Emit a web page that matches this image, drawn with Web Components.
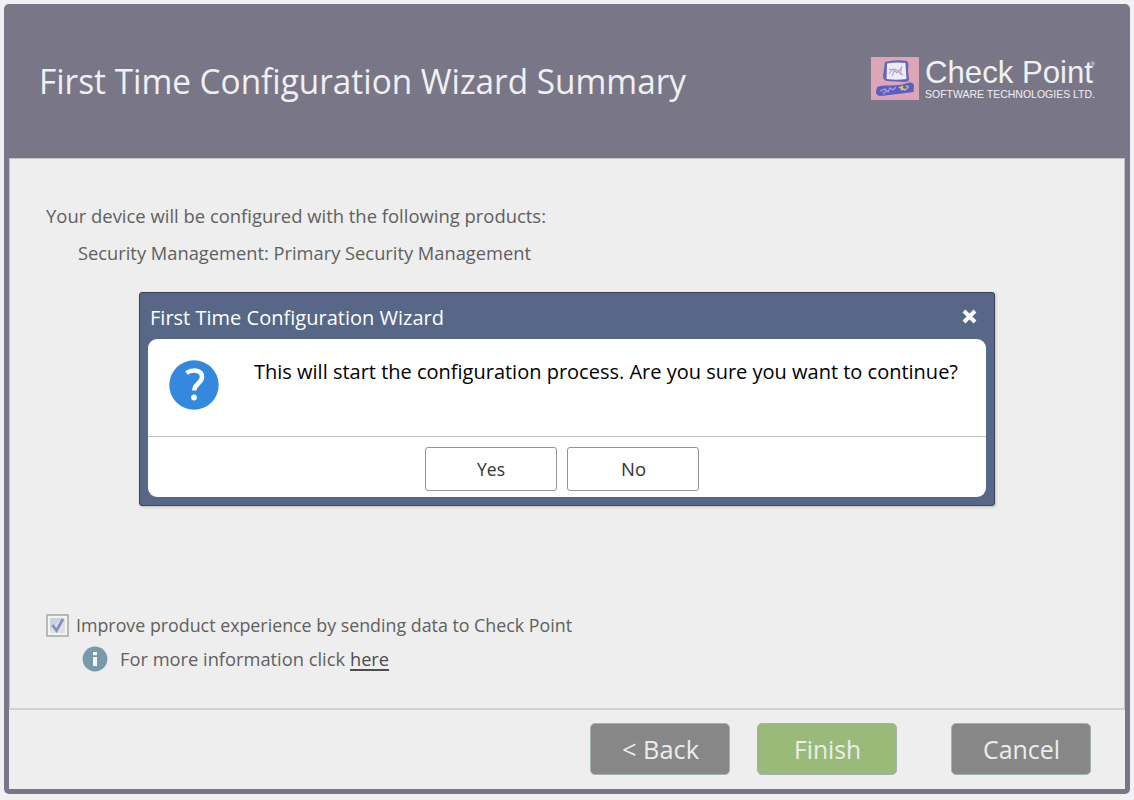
<!DOCTYPE html>
<html lang="en">
<head>
<meta charset="utf-8">
<title>First Time Configuration Wizard</title>
<style>
html, body { margin: 0; height: 100%; background: #f0f1f0; font-family: "Open Sans", "Noto Sans", sans-serif; overflow: hidden; }
</style>
</head>
<body>
<wizard-window>
  <fit-text slot="title" width="647" size="35" line="48">First Time Configuration Wizard Summary</fit-text>
  <check-point-logo slot="brand"></check-point-logo>
  <product-summary></product-summary>
  <product-consent></product-consent>
  <wizard-button slot="actions" label="&lt; Back" width="77"></wizard-button>
  <wizard-button slot="actions" kind="primary" label="Finish" width="67"></wizard-button>
  <wizard-button slot="actions" kind="last" label="Cancel" width="77"></wizard-button>
</wizard-window>
<confirm-dialog>
  <fit-text slot="title" width="294" size="20.7" line="28">First Time Configuration Wizard</fit-text>
  <fit-text slot="message" width="704" size="20.7" line="28">This will start the configuration process. Are you sure you want to continue?</fit-text>
  <dialog-button slot="buttons" label="Yes" width="28"></dialog-button>
  <dialog-button slot="buttons" label="No" width="25"></dialog-button>
</confirm-dialog>

<script>
const define = (name, html, setup) => customElements.define(name, class extends HTMLElement {
  connectedCallback() {
    if (this.shadowRoot) return;
    const t = document.createElement('template');
    t.innerHTML = html;
    this.attachShadow({ mode: 'open' }).append(t.content.cloneNode(true));
    if (setup) setup(this, this.shadowRoot);
  }
});

// Single line of text condensed or stretched to a given width.
define('fit-text', `<style>
:host { display: block; white-space: nowrap; flex: none; }
span { display: inline-block; transform-origin: 0 50%; }
:host([underline]) span { text-decoration: underline; text-underline-offset: 3px; text-decoration-thickness: 1.5px; }
</style><span><slot></slot></span>`, (el, root) => {
  const span = root.querySelector('span');
  const width = +el.getAttribute('width');
  el.style.width = width + 'px';
  el.style.fontSize = el.getAttribute('size') + 'px';
  el.style.lineHeight = el.getAttribute('line') + 'px';
  el.style.height = el.getAttribute('line') + 'px';
  const natural = span.getBoundingClientRect().width;
  if (natural) span.style.transform = 'scaleX(' + width / natural + ')';
});

define('check-point-logo', `<style>
:host { display: flex; gap: 6px; color: #f0f0f2; font-family: "Liberation Sans", sans-serif; }
svg { display: block; }
.name { display: flex; }
.words { display: block; }
sup { font-size: 6px; line-height: 8px; margin-left: -2px; margin-top: 3px; }
</style>
<svg width="48" height="43" viewBox="0 0 48 43">
  <rect width="48" height="43" fill="#dda6b8"/>
  <path d="M14 5 Q25 2 36 4 Q38 5 37 14 L38 22 Q38 25 34 25 L16 24 Q12 23 12 19Z" fill="#6163bd"/>
  <path d="M16 6.5 Q25 5 34.5 6 L35.5 22 Q26 23.5 15.5 22Z" fill="#ececf4"/>
  <path d="M18 17l4-5 4 4 5-6M21 19l3-7 3 2 5 4M18 12l3 1M29 18l2-9" fill="none" stroke="#b3a0bf" stroke-width="1.1"/>
  <path d="M6 30 Q10 28 16 28.5 Q30 29 38 25.5 Q43 25 43 29 L42.500 35 Q28 37 10 39 Q5 39 5 35Z" fill="#5c5fc0"/>
  <path d="M9 34l5-2 3 3 2-4 3 2 3-3M12 37l3-3M34 33l4-3" fill="none" stroke="#a8a3d8" stroke-width="1.2"/>
  <path d="M28 30l2 1 2-2M30 33l2-1 3 1M35 29.500l2-.5" fill="none" stroke="#d9cc5b" stroke-width="1.800"/>
</svg>
<div class="words">
  <div class="name"><fit-text width="168" size="32" line="31">Check Point</fit-text><sup>®</sup></div>
  <fit-text width="170" size="11.5" line="12">SOFTWARE TECHNOLOGIES LTD.</fit-text>
</div>`);

define('wizard-window', `<style>
:host { display: flex; flex-direction: column; box-sizing: border-box; width: 1126px; height: 790px; margin: 4px; margin-bottom: 0;
  padding: 0 5px 5px; background: #797787; border-radius: 5px; }
header { display: flex; justify-content: space-between; align-items: flex-start; flex: none; height: 154px; box-sizing: border-box; padding: 53px 30px 0 30px; color: #f0f0f2; }
main { flex: 1; background: #eee; border: 1px solid #c3c3c7; border-bottom: 0; display: flex; flex-direction: column; justify-content: space-between; padding: 44px 36px 36px; }
footer { flex: none; height: 81px; box-sizing: border-box; background: #eee; border-top: 2px solid #d2d2d2; display: flex; justify-content: flex-end; padding: 13px 34px 0; }
</style>
<header><slot name="title"></slot><slot name="brand"></slot></header>
<main><slot></slot></main>
<footer><slot name="actions"></slot></footer>`);

define('product-summary', `<style>
:host { display: flex; flex-direction: column; gap: 11px; color: #606060; }
.item { padding-left: 32px; }
</style>
<fit-text width="500" size="19" line="26">Your device will be configured with the following products:</fit-text>
<fit-text class="item" width="453" size="19" line="26">Security Management: Primary Security Management</fit-text>`);

define('product-consent', `<style>
:host { display: flex; flex-direction: column; gap: 8px; color: #606060; }
div { display: flex; align-items: center; height: 26px; }
.check { gap: 7px; }
.info { padding-left: 36px; gap: 12px; }
.link { display: flex; gap: 5px; }
.here { color: #4c4c54; }
svg { display: block; flex: none; }
</style>
<div class="check">
  <svg width="23" height="23" viewBox="0 0 23 23"><rect x="1" y="1" width="21" height="21" fill="#f3f3f3" stroke="#aeaeae" stroke-width="1.7"/><path d="M4 4h15v15H4z" fill="#dde1e6"/><path d="M4 4h12L4 16z" fill="#cbd3dc"/><path d="M6.5 11l4 5.5L17 5" fill="none" stroke="#7f92bd" stroke-width="2.8"/></svg>
  <fit-text width="496" size="19" line="26">Improve product experience by sending data to Check Point</fit-text>
</div>
<div class="info">
  <svg width="26" height="26" viewBox="0 0 26 26"><circle cx="13" cy="13" r="12.4" fill="#7899aa"/><path d="M11 6h4v3.2h-4zM11 11h4v9h-4z" fill="#f5f8fa"/></svg>
  <div class="link"><fit-text width="225" size="19" line="26">For more information click</fit-text><fit-text class="here" underline width="39" size="19" line="26">here</fit-text></div>
</div>`);

define('wizard-button', `<style>
:host { display: flex; align-items: center; justify-content: center; box-sizing: border-box; width: 140px; height: 52px; margin-left: 27px;
  background: #878787; border: 1.5px solid #a3b1b5; border-radius: 5px; color: #ededed; }
:host([kind=primary]) { background: #9aba79; }
:host([kind=last]) { margin-left: 54px; }
</style>`, (el, root) => {
  const t = document.createElement('fit-text');
  t.setAttribute('width', el.getAttribute('width'));
  t.setAttribute('size', '26');
  t.setAttribute('line', '46');
  t.textContent = el.getAttribute('label');
  root.append(t);
});

define('dialog-button', `<style>
:host { display: flex; align-items: center; justify-content: center; box-sizing: border-box; width: 132px; height: 44px;
  background: #fff; border: 1.5px solid #949494; border-radius: 3px; color: #333; }
</style>`, (el, root) => {
  const t = document.createElement('fit-text');
  t.setAttribute('width', el.getAttribute('width'));
  t.setAttribute('size', '19');
  t.setAttribute('line', '40');
  t.textContent = el.getAttribute('label');
  root.append(t);
});

define('confirm-dialog', `<style>
:host { position: absolute; left: 139px; top: 292px; width: 856px; height: 214px; box-sizing: border-box; display: flex; flex-direction: column;
  padding: 0 8px 8px; background: #566787; border: 1.5px solid #3f4157; border-radius: 3px; box-shadow: 1px 1px 3px #0003; }
.bar { display: flex; justify-content: space-between; align-items: flex-start; height: 46px; flex: none; box-sizing: border-box; padding: 10px 8px 0 2px; color: #fff; }
.bar svg { margin-top: 5px; }
.panel { flex: 1; background: #fff; border-radius: 9px; display: flex; flex-direction: column; color: #000; }
.body { display: flex; height: 98px; box-sizing: border-box; gap: 35px; padding: 18px 0 0 21px; border-bottom: 1.5px solid #c3c3c3; }
.body svg { margin-top: 1px; }
.buttons { display: flex; justify-content: center; gap: 10px; padding-top: 10px; margin-right: 10px; }
svg { display: block; flex: none; }
slot[name=buttons] { display: contents; }
</style>
<div class="bar"><slot name="title"></slot>
  <svg width="17" height="17" viewBox="0 0 17 17"><path d="M3 3L14 14M14 3L3 14" stroke="#fff" stroke-width="4"/></svg></div>
<div class="panel">
  <div class="body">
    <svg width="50" height="54" viewBox="0 0 50 54"><circle cx="25" cy="27" r="24.7" fill="#3489de"/><path d="M17.500 15C23 11.3 33 11.5 33 19C33 25.5 25.300 25.5 25.300 32.500" fill="none" stroke="#fff" stroke-width="4.500"/><circle cx="25" cy="39.500" r="2.900" fill="#fff"/></svg>
    <slot name="message"></slot>
  </div>
  <div class="buttons"><slot name="buttons"></slot></div>
</div>`);
</script>
</body>
</html>
